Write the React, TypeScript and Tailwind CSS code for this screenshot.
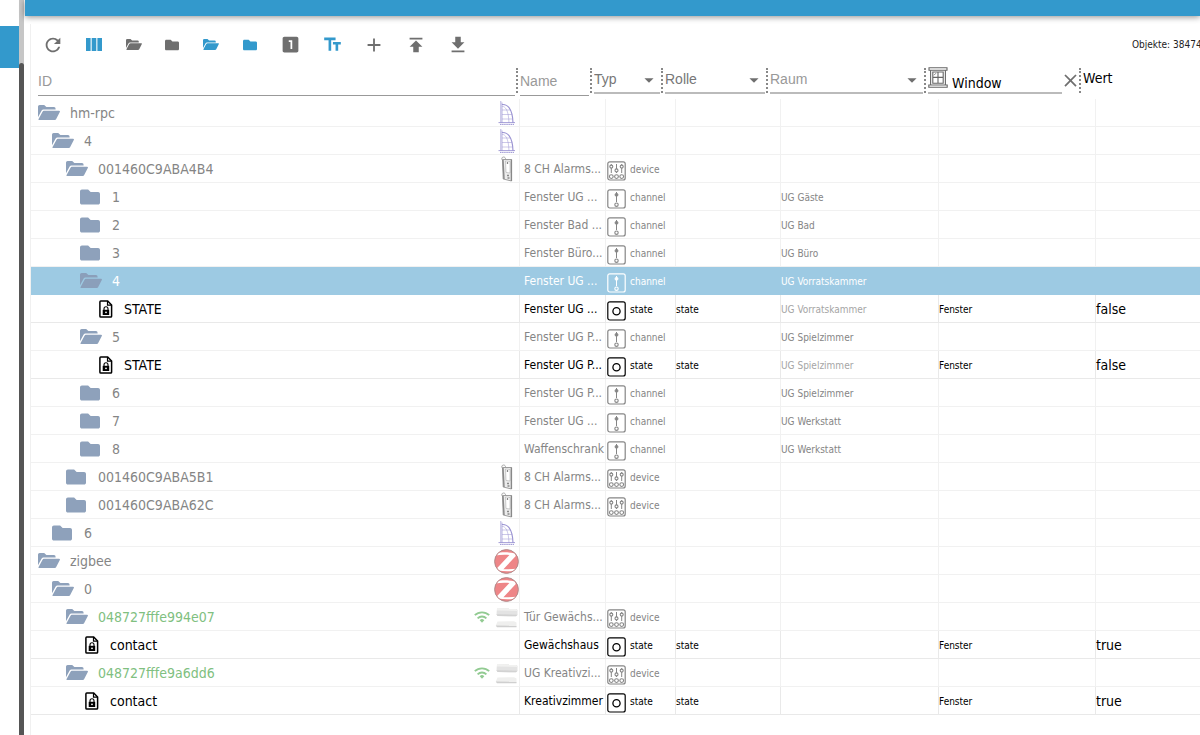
import { useState } from 'react';
import type { ReactNode } from 'react';
import { FaFolder } from 'react-icons/fa';
import {
  MdAdd,
  MdArrowDropDown,
  MdClose,
  MdGetApp,
  MdLooksOne,
  MdPublish,
  MdRefresh,
  MdTextFields,
} from 'react-icons/md';

type Kind = 'device' | 'channel' | 'state';
type Picture = 'ccu' | 'alarm' | 'zigbee' | 'sensor';

interface Row {
  key: string;
  level: number;
  label: string;
  open?: boolean;
  kind?: Kind;
  picture?: Picture;
  online?: boolean;
  name?: string;
  role?: string;
  room?: string;
  fn?: string;
  value?: string;
}

const rows: Row[] = [
  { key: 'hm-rpc', level: 0, label: 'hm-rpc', open: true, picture: 'ccu' },
  { key: 'hm-rpc.4', level: 1, label: '4', open: true, picture: 'ccu' },
  { key: 'A4B4', level: 2, label: '001460C9ABA4B4', open: true, picture: 'alarm', name: '8 CH Alarms...', kind: 'device' },
  { key: 'A4B4.1', level: 3, label: '1', name: 'Fenster UG ...', kind: 'channel', room: 'UG Gäste' },
  { key: 'A4B4.2', level: 3, label: '2', name: 'Fenster Bad ...', kind: 'channel', room: 'UG Bad' },
  { key: 'A4B4.3', level: 3, label: '3', name: 'Fenster Büro...', kind: 'channel', room: 'UG Büro' },
  { key: 'A4B4.4', level: 3, label: '4', open: true, name: 'Fenster UG ...', kind: 'channel', room: 'UG Vorratskammer' },
  { key: 'A4B4.4.STATE', level: 4, label: 'STATE', name: 'Fenster UG ...', kind: 'state', role: 'state', room: 'UG Vorratskammer', fn: 'Fenster', value: 'false' },
  { key: 'A4B4.5', level: 3, label: '5', open: true, name: 'Fenster UG P...', kind: 'channel', room: 'UG Spielzimmer' },
  { key: 'A4B4.5.STATE', level: 4, label: 'STATE', name: 'Fenster UG P...', kind: 'state', role: 'state', room: 'UG Spielzimmer', fn: 'Fenster', value: 'false' },
  { key: 'A4B4.6', level: 3, label: '6', name: 'Fenster UG P...', kind: 'channel', room: 'UG Spielzimmer' },
  { key: 'A4B4.7', level: 3, label: '7', name: 'Fenster UG ...', kind: 'channel', room: 'UG Werkstatt' },
  { key: 'A4B4.8', level: 3, label: '8', name: 'Waffenschrank', kind: 'channel', room: 'UG Werkstatt' },
  { key: 'A5B1', level: 2, label: '001460C9ABA5B1', picture: 'alarm', name: '8 CH Alarms...', kind: 'device' },
  { key: 'A62C', level: 2, label: '001460C9ABA62C', picture: 'alarm', name: '8 CH Alarms...', kind: 'device' },
  { key: 'hm-rpc.6', level: 1, label: '6', picture: 'ccu' },
  { key: 'zigbee', level: 0, label: 'zigbee', open: true, picture: 'zigbee' },
  { key: 'zigbee.0', level: 1, label: '0', open: true, picture: 'zigbee' },
  { key: '4e07', level: 2, label: '048727fffe994e07', open: true, online: true, picture: 'sensor', name: 'Tür Gewächs...', kind: 'device' },
  { key: '4e07.contact', level: 3, label: 'contact', name: 'Gewächshaus', kind: 'state', role: 'state', fn: 'Fenster', value: 'true' },
  { key: '6dd6', level: 2, label: '048727fffe9a6dd6', open: true, online: true, picture: 'sensor', name: 'UG Kreativzi...', kind: 'device' },
  { key: '6dd6.contact', level: 3, label: 'contact', name: 'Kreativzimmer', kind: 'state', role: 'state', fn: 'Fenster', value: 'true' },
];

const indents = ['pl-[7px]', 'pl-[21px]', 'pl-[35px]', 'pl-[49px]', 'pl-[63px]'];

function OpenFolderIcon({ className }: { className: string }) {
  return (
    <svg viewBox="0 0 22 15" className={className} fill="currentColor">
      <path d="M0 12.2V1.6A1.6 1.6 0 0 1 1.6 0H6.2L8.4 2.1H16a1.6 1.6 0 0 1 1.6 1.6V4.6H6.1C4.8 4.6 4 5 3.4 6.1Z" />
      <path d="M6.4 5.7H21c.9 0 1.2.5.8 1.2l-3.6 7c-.4.8-.9 1.1-1.7 1.1H1.3c-.8 0-1-.5-.7-1.1L4.4 6.9c.4-.8 1-1.2 2-1.2Z" />
    </svg>
  );
}

function ColumnsIcon() {
  return (
    <svg viewBox="0 0 16 13" className="h-[13px] w-4" fill="currentColor">
      <path d="M0 0h4.6v13H0zM5.7 0h4.6v13H5.7zM11.4 0H16v13h-4.6z" />
    </svg>
  );
}

function LockedFileIcon() {
  return (
    <svg viewBox="0 0 14 18" className="h-[18px] w-3.5 text-black" fill="none" stroke="currentColor">
      <path d="M1.8 1H8.7L12.6 5V16.2a.9.9 0 0 1-.9.9H1.8a.9.9 0 0 1-.9-.9V1.9A.9.9 0 0 1 1.8 1Z" strokeWidth="1.5" />
      <path d="M8.5 1V5.2h4" strokeWidth="1.2" />
      <path d="M5 10V8.8a2 2 0 0 1 4 0V10" strokeWidth="1.1" />
      <path d="M3.7 9.8h6.5V15H3.7z" fill="currentColor" stroke="none" />
      <circle cx="7" cy="12.3" r=".9" fill="#fff" stroke="none" />
    </svg>
  );
}

function CcuIcon() {
  return (
    <svg viewBox="0 0 18 24" className="h-6 w-[18px]" fill="none" stroke="#9a93d2">
      <path d="M2.8 0V22M4 1.5V22" strokeWidth=".7" />
      <path d="M4 3.5C9 3 14.6 7 15 22" strokeWidth="1.1" />
      <path d="M4 5.3C7.5 5.5 10.5 9 11 22M4 9h8M4 13.5h10M4 18h10.5" strokeWidth=".5" />
      <path d="M.5 21.6h16.5" strokeWidth=".9" />
      <path d="M2 23.4h14" strokeWidth="1" strokeDasharray="1.5 .6" />
    </svg>
  );
}

function AlarmIcon() {
  return (
    <svg viewBox="0 0 14 26" className="h-[26px] w-3.5" fill="none" stroke="#888">
      <path d="M2.5 4.5C1 2.5 2 1 3.5 1s2 1 2 2" strokeWidth=".7" />
      <path d="M2.5 3.5L11.5 3.5V25L3.2 23Z" fill="#ececec" strokeWidth=".8" />
      <path d="M3 4L4 23" strokeWidth="1.4" />
      <path d="M11.4 3.5V25" strokeWidth="1.4" />
      <path d="M5.5 5L10 5.5V17L6 16.4Z" fill="#fff" strokeWidth=".4" />
      <path d="M7.5 6v2M7 19.5h2M7.5 22h2" strokeWidth="1.3" />
    </svg>
  );
}

function ZigbeeIcon() {
  return (
    <svg viewBox="0 0 25 25" className="size-[25px]">
      <defs>
        <clipPath id="zb">
          <circle cx="12.5" cy="12.5" r="11.3" />
        </clipPath>
      </defs>
      <circle cx="12.5" cy="12.5" r="11.9" fill="#ee8587" stroke="#a88787" strokeWidth=".9" />
      <g clipPath="url(#zb)">
        <path d="M2 4.4C7 3 14 3 21 4.4L21.8 7 9.4 20.2C14 20.5 19 20.3 24 19.5V21.2C18 22.5 10 22.5 4 21.5L3.2 18.9 15.4 5.9C11 5.6 6 5.6 1 6.6Z" fill="#fff" />
      </g>
    </svg>
  );
}

function SensorIcon() {
  return (
    <svg viewBox="0 0 24 24" className="size-6">
      <path d="M2 3L21 3.3 22.5 5V10L21 11.3 2.5 11 1.5 9.5Z" fill="#e3e3e3" />
      <path d="M2 3L21 3.3 22.5 6 2 5.5Z" fill="#f1f1f0" />
      <path d="M1.5 9.3L22.5 9.8 21 11.3 2.5 11Z" fill="#d2d2d2" />
      <path d="M2.5 16.5L19 16.3 21.5 17.5V21.5L2 21.8 .8 20.5Z" fill="#efefee" />
      <path d="M.8 20.5L21.5 20.8V22.3H2Z" fill="#cfcfcf" />
    </svg>
  );
}

function WifiIcon() {
  return (
    <svg viewBox="0 0 16 12" className="h-3 w-4" fill="none" stroke="#92cb92" strokeWidth="1.8">
      <path d="M.8 4.2a10.4 10.4 0 0 1 14.4 0M3.6 7.3a6.3 6.3 0 0 1 8.8 0" />
      <path d="M5.7 9.2a3.3 3.3 0 0 1 4.6 0L8 11.7Z" fill="#92cb92" stroke="none" />
    </svg>
  );
}

function KindIcon({ kind }: { kind: Kind }) {
  return (
    <svg viewBox="0 0 19 20" className="h-5 w-[19px] shrink-0" fill="none" stroke="currentColor">
      <rect x=".8" y=".8" width="17.4" height="18.2" rx="2" strokeWidth="1.2" />
      {kind === 'state' && <circle cx="9.5" cy="10.2" r="3.6" strokeWidth="1.3" />}
      {kind === 'channel' && (
        <>
          <path d="M9.5 3v10" strokeWidth="1" />
          <circle cx="9.5" cy="5.8" r="1.5" fill="currentColor" strokeWidth=".8" />
          <circle cx="9.5" cy="15.7" r="1.7" strokeWidth="1.1" />
        </>
      )}
      {kind === 'device' && (
        <>
          <path d="M4.3 3v9M9.5 3v9M14.7 3v9" strokeWidth="1" />
          <g fill="#fff" strokeWidth="1.1">
            <circle cx="4.3" cy="5.6" r="1.5" />
            <circle cx="9.5" cy="9.4" r="1.5" />
            <circle cx="14.7" cy="5.6" r="1.5" />
          </g>
          <g strokeWidth="1.1">
            <circle cx="4.3" cy="15.6" r="1.9" />
            <circle cx="9.5" cy="15.6" r="1.9" />
            <circle cx="14.7" cy="15.6" r="1.9" />
          </g>
        </>
      )}
    </svg>
  );
}

function WindowIcon() {
  return (
    <svg viewBox="0 0 20 21" className="h-[21px] w-5 shrink-0" fill="none" stroke="#666" strokeWidth="1.1">
      <path d="M1 .8h18v2.4H1zM.8 18h18.4v2.2H.8z" />
      <path d="M2.6 3.2V18M17.4 3.2V18" />
      <path d="M4.8 5h10.4v11.2H4.8zM10 5v11.2M4.8 10.4h10.4" />
      <path d="M6 8.2l2-2" strokeWidth=".8" />
    </svg>
  );
}

const pictures: Record<Picture, ReactNode> = {
  ccu: <CcuIcon />,
  alarm: <AlarmIcon />,
  zigbee: <ZigbeeIcon />,
  sensor: <SensorIcon />,
};

function ToolButton({ label, className, children }: { label: string; className: string; children: ReactNode }) {
  return (
    <button type="button" aria-label={label} className={`flex h-10 shrink-0 items-center justify-center ${className}`}>
      {children}
    </button>
  );
}

function Toolbar() {
  return (
    <div className="flex h-[41px] items-center pl-px">
      <ToolButton label="Aktualisieren" className="w-[42px] text-[#6f6f6f]"><MdRefresh className="size-[22px]" /></ToolButton>
      <ToolButton label="Spalten" className="w-10 text-[#3399cc]"><ColumnsIcon /></ToolButton>
      <ToolButton label="Alle aufklappen" className="w-[39px] text-[#6f6f6f]"><OpenFolderIcon className="h-[11px] w-4" /></ToolButton>
      <ToolButton label="Alle zuklappen" className="w-[38px] text-[#6f6f6f]"><FaFolder className="size-3.5" /></ToolButton>
      <ToolButton label="Ebene aufklappen" className="w-10 text-[#3399cc]"><OpenFolderIcon className="h-[11px] w-4" /></ToolButton>
      <ToolButton label="Ebene zuklappen" className="w-[38px] text-[#3399cc]"><FaFolder className="size-3.5" /></ToolButton>
      <ToolButton label="Zustände" className="w-[42px] text-[#6f6f6f]"><MdLooksOne className="size-[21px]" /></ToolButton>
      <ToolButton label="Textgröße" className="w-[42px] text-[#3399cc]"><MdTextFields className="size-[21px]" /></ToolButton>
      <ToolButton label="Hinzufügen" className="w-[42px] text-[#6f6f6f]"><MdAdd className="size-[22px]" /></ToolButton>
      <ToolButton label="Hochladen" className="w-[42px] text-[#6f6f6f]"><MdPublish className="size-[22px]" /></ToolButton>
      <ToolButton label="Herunterladen" className="w-[42px] text-[#6f6f6f]"><MdGetApp className="size-[22px]" /></ToolButton>
      <div className="ml-auto w-[68px] shrink-0 text-[10px] whitespace-nowrap text-[#222]">Objekte: 38474</div>
    </div>
  );
}

function Separator() {
  return <div className="mt-[3px] mr-[2px] ml-px h-[25px] shrink-0 border-l-2 border-dotted border-[#888]" />;
}

function TextFilter({ label, className }: { label: string; className: string }) {
  return (
    <input
      type="text"
      aria-label={label}
      placeholder={label}
      className={`h-[31px] shrink-0 border-b border-[#999] bg-transparent pt-px font-['Liberation_Sans',Arial,sans-serif] text-sm text-black outline-none placeholder:text-[#999] ${className}`}
    />
  );
}

function SelectFilter({ label, tone, className }: { label: string; tone: string; className: string }) {
  return (
    <div className={`relative h-[29px] shrink-0 border-b-2 border-[#bbb] ${className}`}>
      <select
        aria-label={label}
        className={`h-full w-full appearance-none bg-transparent font-['Liberation_Sans',Arial,sans-serif] text-sm outline-none ${tone}`}
      >
        <option>{label}</option>
      </select>
      <MdArrowDropDown className="pointer-events-none absolute top-1 right-0 size-[22px] text-[#6f6f6f]" />
    </div>
  );
}

function Filters() {
  return (
    <div className="flex h-[34px] items-start pl-[7px]">
      <TextFilter label="ID" className="w-[477px]" />
      <Separator />
      <TextFilter label="Name" className="w-[69px]" />
      <Separator />
      <SelectFilter label="Typ" tone="text-[#777]" className="w-[66px]" />
      <Separator />
      <SelectFilter label="Rolle" tone="text-[#777]" className="w-[100px]" />
      <Separator />
      <SelectFilter label="Raum" tone="text-[#999]" className="w-[153px]" />
      <Separator />
      <div className="flex h-[29px] w-[134px] shrink-0 items-start border-b-2 border-[#bbb] pt-[2px]">
        <WindowIcon />
        <select aria-label="Funktion" className="mt-[4px] ml-1 h-6 grow appearance-none bg-transparent text-sm text-black outline-none">
          <option>Window</option>
        </select>
      </div>
      <button type="button" aria-label="Filter löschen" className="flex h-[31px] w-[16px] shrink-0 items-center justify-center text-[#6f6f6f]">
        <MdClose className="size-[21px] shrink-0" />
      </button>
      <Separator />
      <div className="flex h-[25px] items-center text-sm text-black">Wert</div>
    </div>
  );
}

function ObjectRow({ row, selected, onSelect }: { row: Row; selected: boolean; onSelect: () => void }) {
  const isState = row.kind === 'state';
  const tone = selected ? 'text-white' : isState ? 'text-black' : 'text-[#858585]';
  const line = selected ? 'border-[#9dcae3]' : isState ? 'border-[#e9e9e9]' : 'border-[#f1f1f1]';
  const cell = `h-7 border-b border-l p-0 whitespace-nowrap ${line}`;
  return (
    <tr onClick={onSelect} className={`${tone} ${selected ? 'bg-[#9dcae3]' : ''}`}>
      <td className={`h-7 border-b p-0 ${line}`}>
        <div className={`flex h-[27px] items-center ${indents[row.level]}`}>
          <span className="flex w-6 shrink-0 items-center">
            {isState ? (
              <span className="pl-[5px]"><LockedFileIcon /></span>
            ) : row.open ? (
              <OpenFolderIcon className={`h-[15px] w-[22px] ${selected ? 'text-[#8b9fba]' : 'text-[#8ea1bb]'}`} />
            ) : (
              <FaFolder className="size-5 text-[#8ea1bb]" />
            )}
          </span>
          <span className={`text-sm ${isState ? 'ml-1.5' : 'ml-2'} ${row.online ? 'text-[#80c080]' : ''}`}>{row.label}</span>
          <span className="ml-auto flex h-7 items-center gap-1 pt-px">
            {row.online && <WifiIcon />}
            <span className="flex w-[25px] items-center justify-center">{row.picture && pictures[row.picture]}</span>
          </span>
        </div>
      </td>
      <td className={`${cell} pl-1 text-xs`}>{row.name}</td>
      <td className={`${cell} text-[10px]`}>
        {row.kind && (
          <div className="flex h-[27px] items-center gap-1 pl-px">
            <span className="pt-1"><KindIcon kind={row.kind} /></span>
            <span className="pt-px">{row.kind}</span>
          </div>
        )}
      </td>
      <td className={`${cell} pt-px text-[10px]`}>{row.role}</td>
      <td className={`${cell} pt-px text-[10px] ${isState ? 'text-[#a5a5a5]' : ''}`}>{row.room}</td>
      <td className={`${cell} pt-px text-[10px]`}>{row.fn}</td>
      <td className={`${cell} text-sm`}>{row.value}</td>
    </tr>
  );
}

export default function App() {
  const [selected, setSelected] = useState('A4B4.4');
  return (
    <div className="flex min-h-screen overflow-hidden bg-white font-['Tahoma','DejaVu_Sans_Condensed','Noto_Sans',sans-serif]">
      <div className="w-[19px] shrink-0 pt-[26px]">
        <div className="h-[42px] bg-[#3399cc]" />
      </div>
      <div className="flex w-[5px] shrink-0 flex-col bg-[#c6c6c6] pt-[63px]">
        <div className="grow rounded-t-sm bg-[#555]" />
      </div>
      <div className="flex min-w-0 grow flex-col pl-px">
        <header className="h-4 shrink-0 bg-[#3399cc] shadow-[0_1px_6px_rgba(0,0,0,0.45)]" />
        <main className="mt-2 ml-[5px] grow border-l border-[#f0f0f0] bg-white">
          <Toolbar />
          <Filters />
          <table className="w-full table-fixed border-separate border-spacing-0">
            <colgroup>
              <col className="w-[488px]" />
              <col className="w-[86px]" />
              <col className="w-[70px]" />
              <col className="w-[105px]" />
              <col className="w-[158px]" />
              <col className="w-[157px]" />
              <col />
            </colgroup>
            <tbody>
              {rows.map((row) => (
                <ObjectRow key={row.key} row={row} selected={row.key === selected} onSelect={() => setSelected(row.key)} />
              ))}
            </tbody>
          </table>
        </main>
      </div>
    </div>
  );
}
